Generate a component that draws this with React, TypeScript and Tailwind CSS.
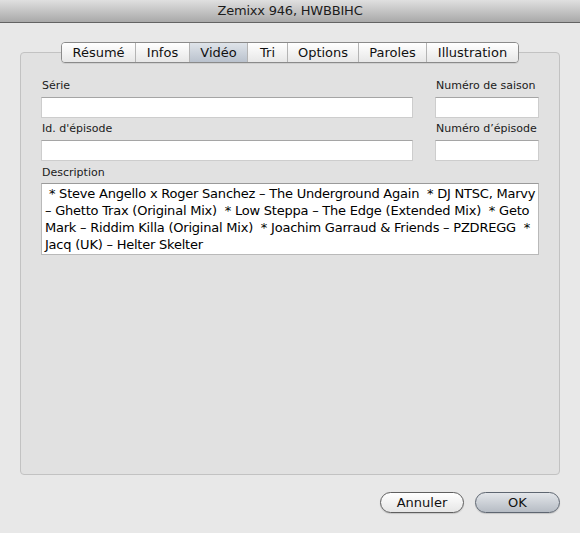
import React from 'react';

const tabs = [
    { label: 'Résumé', w: 'w-[73px]' },
    { label: 'Infos', w: 'w-[54px]' },
    { label: 'Vidéo', w: 'w-[58px]', active: true },
    { label: 'Tri', w: 'w-[40px]' },
    { label: 'Options', w: 'w-[71px]' },
    { label: 'Paroles', w: 'w-[68px]' },
    { label: 'Illustration', w: 'w-[92px]' },
];

// wrapped the same way the original field wraps
const descriptionLines = [
    ' * Steve Angello x Roger Sanchez – The Underground Again  * DJ NTSC, Marvy',
    '– Ghetto Trax (Original Mix)  * Low Steppa – The Edge (Extended Mix)  * Geto',
    'Mark – Riddim Killa (Original Mix)  * Joachim Garraud & Friends – PZDREGG  *',
    'Jacq (UK) – Helter Skelter',
];

function Field({ label, width }: { label: string; width: string }) {
    return (
        <div className={`flex flex-col ${width}`}>
            <label className="text-[11px] leading-[14px] h-[14px] mb-[4px] text-[#1a1a1a] pl-[1px]">{label}</label>
            <div className="h-[21px] bg-white border border-[#cdcdcd] border-t-[#a5a5a5]" />
        </div>
    );
}

export default function App() {
    return (
        <div
            className="w-[580px] h-[533px] bg-[#e8e8e8] flex flex-col overflow-hidden"
            style={{ fontFamily: '"DejaVu Sans", "Liberation Sans", sans-serif' }}
        >
            {/* title bar */}
            <div className="h-[23px] shrink-0 flex items-center justify-center bg-gradient-to-b from-[#e0e0e0] to-[#a9a9a9] border-b border-[#636363] text-[13px] tracking-[-0.2px] text-[#1c1c1c]">
                Zemixx 946, HWBBIHC
            </div>

            <div className="mx-[20px] mt-[19px] flex flex-col">
                {/* tabs */}
                <div className="relative z-10 flex justify-center">
                    <div className="flex h-[21px] rounded-[4px] border border-[#8a8a8a] overflow-hidden shadow-[0_1px_0_rgba(0,0,0,0.08)]">
                        {tabs.map((t, i) => (
                            <div
                                key={t.label}
                                className={`${t.w} flex items-center justify-center text-[13px] text-[#111] ${i > 0 ? 'border-l border-[#b4b4b4]' : ''} ${
                                    t.active
                                        ? 'bg-gradient-to-b from-[#dfe4ea] to-[#bac2cd]'
                                        : 'bg-gradient-to-b from-[#ffffff] to-[#e7e7e7]'
                                }`}
                            >
                                {t.label}
                            </div>
                        ))}
                    </div>
                </div>

                {/* panel */}
                <div className="-mt-[11px] h-[423px] rounded-[4px] border border-[#c2c2c2] bg-[#e1e1e1] pt-[26px] pl-[20px] pr-[19px]">
                    <div className="flex gap-[22px]">
                        <Field label="Série" width="w-[372px]" />
                        <Field label="Numéro de saison" width="w-[104px]" />
                    </div>
                    <div className="flex gap-[22px] mt-[4px]">
                        <Field label="Id. d'épisode" width="w-[372px]" />
                        <Field label="Numéro d’épisode" width="w-[104px]" />
                    </div>
                    <div className="mt-[5px] flex flex-col">
                        <label className="text-[11px] leading-[14px] h-[14px] mb-[3px] text-[#1a1a1a] pl-[1px]">Description</label>
                        <div className="w-[498px] h-[72px] overflow-hidden bg-white border border-[#b9b9b9] border-t-[#9a9a9a] pl-[3px] pt-[1px] text-[13px] leading-[17px] tracking-[-0.22px] text-black">
                            {descriptionLines.map((line, i) => (
                                <div key={i} className="whitespace-pre">
                                    {line}
                                </div>
                            ))}
                        </div>
                    </div>
                </div>
            </div>

            {/* buttons */}
            <div className="flex justify-end gap-[11px] pr-[20px] mt-[17px]">
                <button className="w-[84px] h-[21px] rounded-full border border-[#5f5f5f] bg-gradient-to-b from-[#ffffff] to-[#e6e6e6] text-[13px] text-[#111] shadow-[0_1px_1px_rgba(0,0,0,0.15)]">
                    Annuler
                </button>
                <button className="w-[85px] h-[21px] rounded-full border border-[#5e6671] bg-gradient-to-b from-[#e3e6ea] to-[#b6bcc4] text-[13px] text-[#111] shadow-[0_1px_1px_rgba(0,0,0,0.15)]">
                    OK
                </button>
            </div>
        </div>
    );
}
